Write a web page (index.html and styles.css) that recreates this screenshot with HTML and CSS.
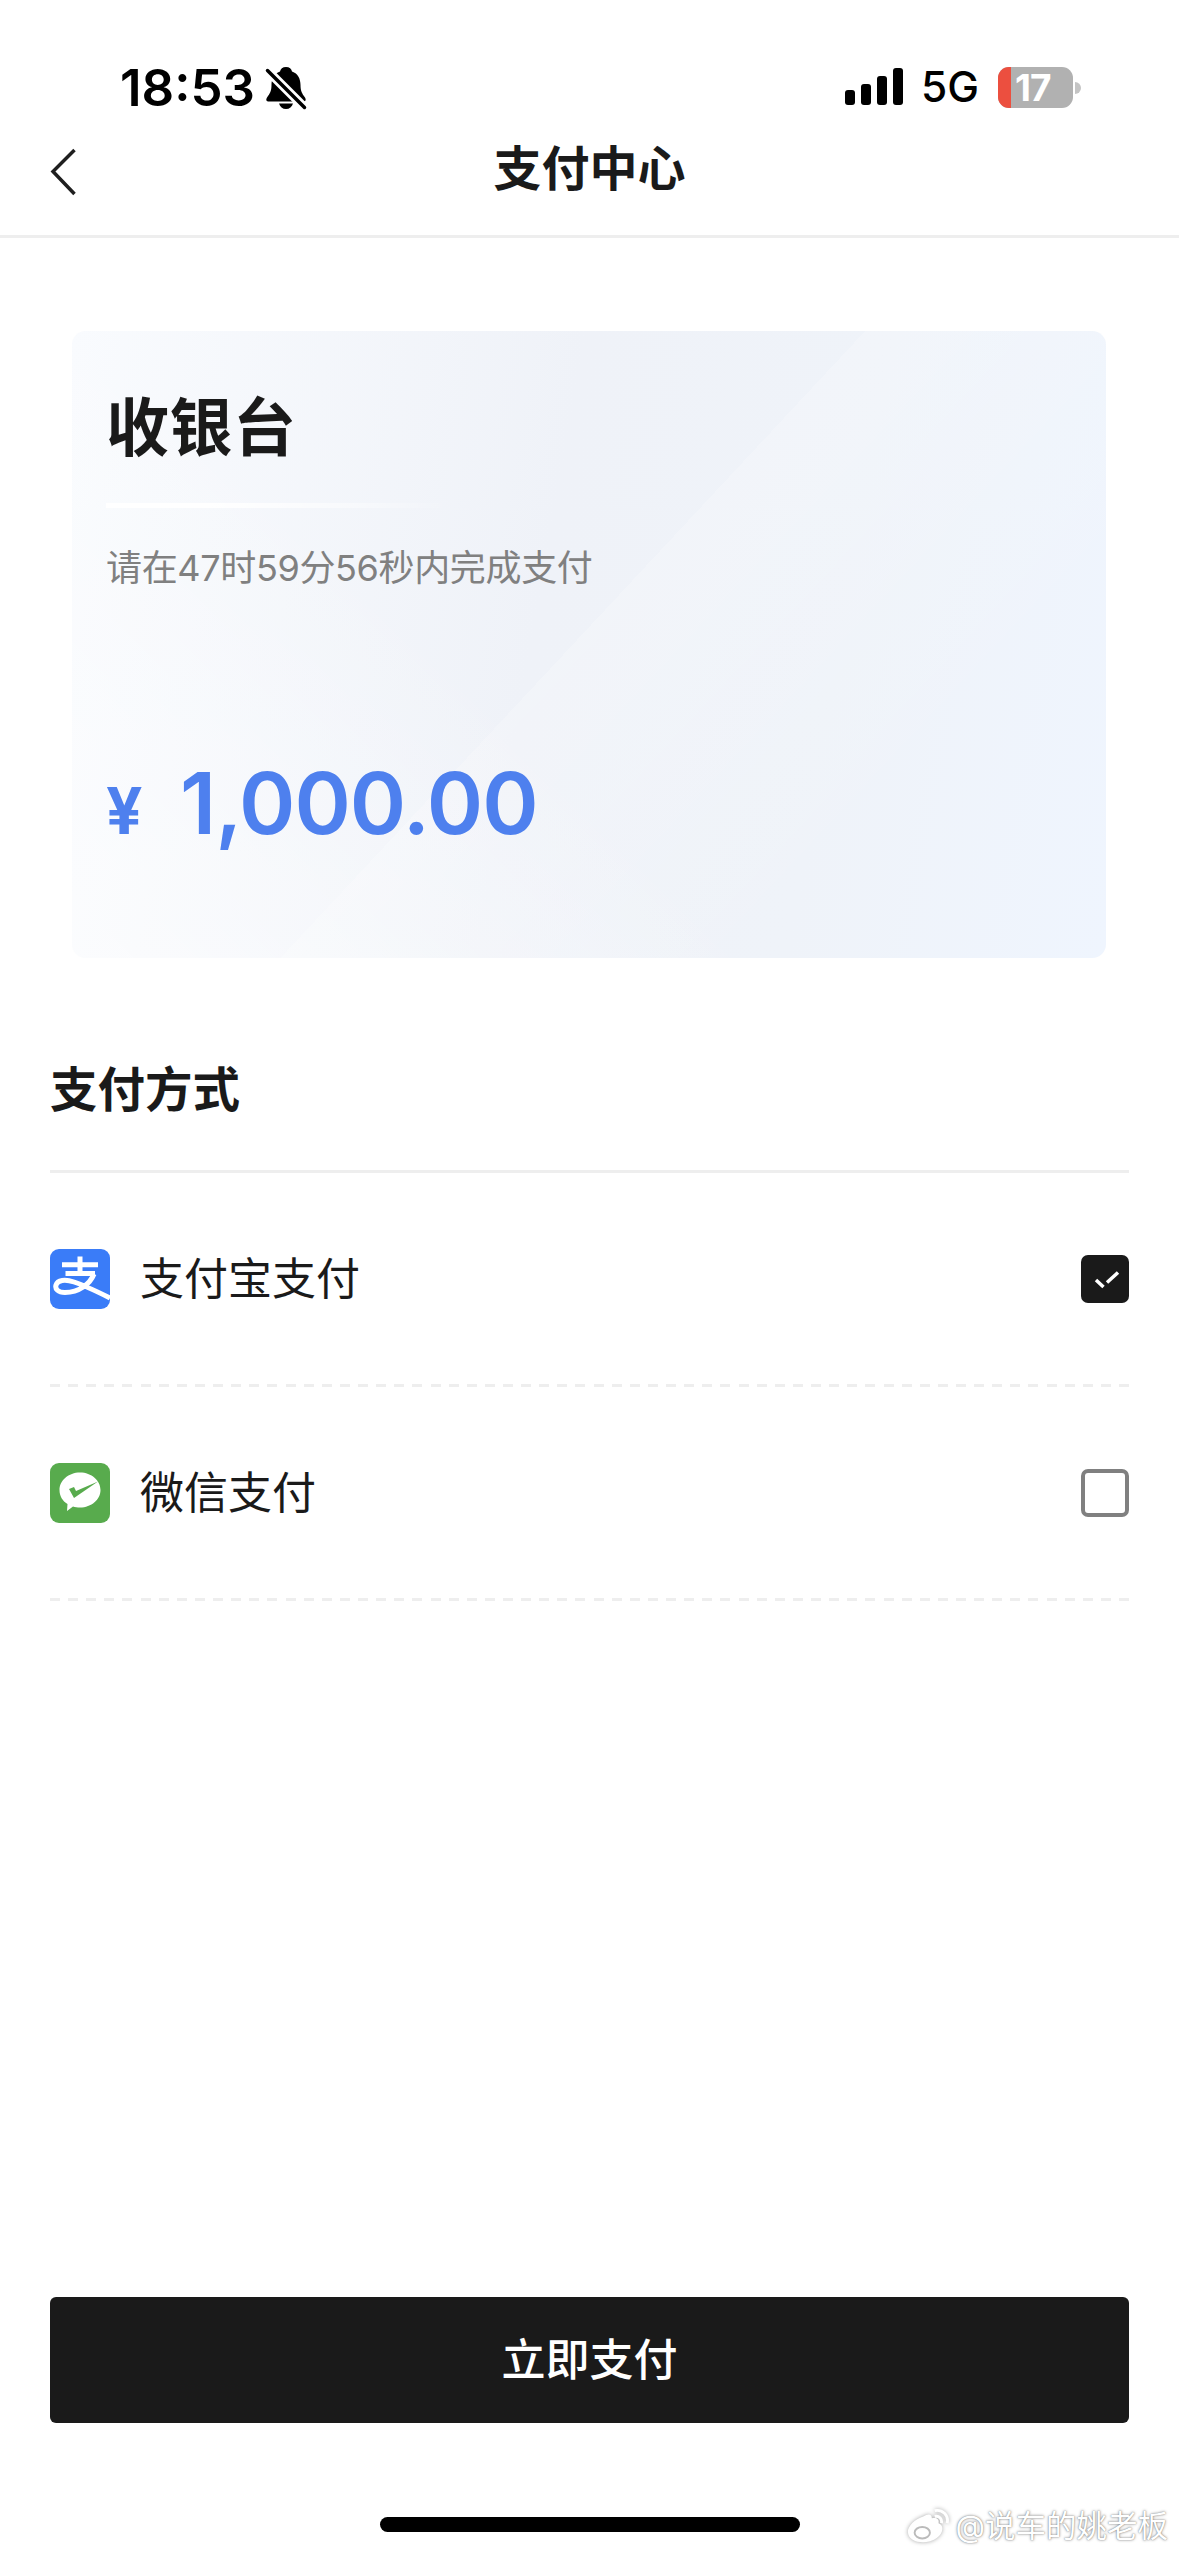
FILE: index.html
```html
<!DOCTYPE html>
<html lang="zh-CN">
<head>
<meta charset="utf-8">
<title>支付中心</title>
<link rel="stylesheet" href="styles.css">
</head>
<body>
<div class="page">
  <header class="header">
    <div class="status">
      <div class="status-left">
        <span class="time">18:53</span>
        <svg class="bell" viewBox="0 0 40 42" aria-hidden="true">
          <path class="bell-body" d="M20 0c3.500 0 5.500 2 6 4.500C32 6.500 34.500 12 34.500 18c0 6 1.500 8.500 4.500 12.500 1.500 2.500 .5 4-2 4H3c-2.500 0-3.500-1.500-2-4C4 26.500 5.500 24 5.500 18 5.500 12 8 6.500 14 4.500 14.500 2 16.500 0 20 0z"/>
          <path class="bell-body" d="M13 36.500h14c-1 3.500-3.500 5.500-7 5.500s-6-2-7-5.500z"/>
          <path class="bell-gap" d="M1 3l38 38"/>
          <path class="bell-slash" d="M1.500 3.500l37 37"/>
        </svg>
      </div>
      <div class="status-right">
        <div class="signal"><i class="bar b1"></i><i class="bar b2"></i><i class="bar b3"></i><i class="bar b4"></i></div>
        <span class="net">5G</span>
        <div class="battery">
          <div class="battery-body"><span class="battery-low"></span><span class="battery-num">17</span></div>
          <span class="battery-nub"></span>
        </div>
      </div>
    </div>
    <nav class="nav">
      <svg class="back" viewBox="0 0 26 48" aria-hidden="true"><path d="M24.500 2L3 23.500 24.500 46"/></svg>
      <h1 class="nav-title">支付中心</h1>
    </nav>
  </header>

  <main class="main">
    <section class="card">
      <h2 class="card-title">收银台</h2>
      <div class="card-rule"></div>
      <p class="card-note">请在47时59分56秒内完成支付</p>
      <div class="amount"><span class="yen">¥</span><span class="value">1,000.00</span></div>
    </section>

    <section class="methods">
      <h3 class="methods-title">支付方式</h3>
      <div class="method">
        <svg class="logo" viewBox="0 0 60 60" aria-hidden="true">
          <rect class="alipay-bg" width="60" height="60" rx="9"/>
          <path class="alipay-mark" d="M12 15.800H48M30 7.500V24M15.500 24.500H45"/>
          <path class="alipay-mark" d="M44 25C40 35 29 43.500 15 43.500 8 43.500 4.800 40 6 36 7.500 31 15 30 24 33 35 36.500 48 43 60 49"/>
        </svg>
        <span class="method-name">支付宝支付</span>
        <span class="check checked">
          <svg viewBox="0 0 48 48" aria-hidden="true"><path d="M15 25l7.500 7M26 27.500L37 17.500"/></svg>
        </span>
      </div>
      <div class="method">
        <svg class="logo" viewBox="0 0 60 60" aria-hidden="true">
          <rect class="wechat-bg" width="60" height="60" rx="9"/>
          <path class="wechat-bubble" d="M30 9.500c11.500 0 20.500 8 20.500 17.500S41.500 44.500 30 44.500c-2.500 0-5-.3-7-1L17 48l.5-7C12.500 38 9.500 33 9.500 27 9.500 17.500 18.500 9.500 30 9.500z"/>
          <path class="wechat-check" d="M19 26l5-2 2 4 22-9.500L24 35z"/>
        </svg>
        <span class="method-name">微信支付</span>
        <span class="check"></span>
      </div>
    </section>
  </main>

  <footer class="footer">
    <button class="pay" type="button">立即支付</button>
    <div class="home"></div>
  </footer>

  <div class="watermark">
    <svg class="weibo" viewBox="0 0 46 38" aria-hidden="true">
      <path class="weibo-body" d="M18 9c5-3 9-3 9 2 4-1 8 0 7 5 3 1 4 3 4 6 0 7-9 14-20 14C9 36 2 32 2 25c0-6 7-13 16-16z"/>
      <ellipse class="weibo-eye" cx="17" cy="26" rx="8" ry="6"/>
      <path class="weibo-wave" d="M30 9c5-1 8 3 7 7M30 3c8-2 15 5 13 13"/>
    </svg>
    <span class="watermark-text">@说车的姚老板</span>
  </div>
</div>
</body>
</html>
```

FILE: styles.css
```css
* { box-sizing: border-box; }

html, body { margin: 0; padding: 0; background: #fff; }

body {
  font-family: Inter, "Noto Sans CJK SC", "Noto Sans", sans-serif;
  color: #1a1a1a;
}

.page {
  position: relative;
  width: 1179px;
  height: 2556px;
  display: flex;
  flex-direction: column;
  background: #fff;
}

/* header */
.header { height: 238px; border-bottom: 3px solid #eeeeee; flex: none; }

.status {
  height: 130px;
  padding: 62px 98px 0 120px;
  display: flex;
  justify-content: space-between;
  align-items: flex-start;
  color: #000;
}

.status-left { display: flex; align-items: center; gap: 11px; height: 52px; }

.time { font-size: 51px; font-weight: 600; line-height: 52px; }

.bell { width: 40px; height: 42px; overflow: visible; }
.bell-body { fill: #000; }
.bell-gap { stroke: #fff; stroke-width: 9; fill: none; }
.bell-slash { stroke: #000; stroke-width: 3.500; stroke-linecap: round; fill: none; }

.status-right { display: flex; align-items: flex-start; height: 50px; }

.signal {
  display: flex;
  align-items: flex-end;
  gap: 6px;
  width: 58px;
  height: 37px;
  margin-top: 6px;
}

.bar { display: block; width: 10px; background: #000; border-radius: 3px; }
.b1 { height: 15px; }
.b2 { height: 21px; }
.b3 { height: 29px; }
.b4 { height: 37px; }

.net { margin-left: 18px; font-size: 42.500px; font-weight: 500; line-height: 50px; }

.battery { display: flex; align-items: center; margin-left: 19px; margin-top: 5px; }

.battery-body {
  display: flex;
  width: 75px;
  height: 41px;
  border-radius: 11px;
  background: #b1b1b1;
}

.battery-low { width: 13px; background: #ec4f3f; border-radius: 11px 0 0 11px; }

.battery-num {
  margin-left: 4px;
  color: #fff;
  font-size: 37px;
  font-weight: 700;
  line-height: 41px;
  letter-spacing: -1px;
}

.battery-nub {
  width: 6px;
  height: 12px;
  margin-left: 2px;
  background: #c4c4c4;
  border-radius: 0 6px 6px 0;
}

.nav {
  position: relative;
  height: 105px;
  display: flex;
  align-items: center;
  justify-content: center;
}

.back {
  position: absolute;
  left: 50px;
  top: 18px;
  width: 26px;
  height: 48px;
  fill: none;
  stroke: #1f1f1f;
  stroke-width: 3.500;
}

.nav-title {
  margin: 0 0 28px;
  font-size: 48px;
  font-weight: 700;
  line-height: 60px;
}

/* main */
.main { flex: 1; padding: 93px 50px 0; }

.card {
  margin: 0 23px 0 22px;
  height: 627px;
  padding: 51px 36px 0 34px;
  border-radius: 14px;
  background:
    linear-gradient(45deg, rgba(255, 255, 255, .55) 0%, rgba(255, 255, 255, 0) 42%),
    linear-gradient(133deg, rgba(255, 255, 255, 0) 49%, rgba(255, 255, 255, .2) 49%, rgba(255, 255, 255, 0) 80%),
    linear-gradient(100deg, #f9fbfe 0%, #eff2f8 45%, #eff3f9 72%, #eff5fe 100%);
}

.card-title {
  margin: 0;
  font-size: 63px;
  font-weight: 700;
  line-height: 90px;
  letter-spacing: 0.5px;
}

.card-rule {
  width: 345px;
  height: 5px;
  margin-top: 31px;
  background: linear-gradient(90deg, #ffffff 0%, #ffffff 30%, rgba(255, 255, 255, 0) 100%);
}

.card-note {
  margin: 35px 0 0;
  color: #808080;
  font-size: 36px;
  line-height: 50px;
  letter-spacing: -0.35px;
}

.amount {
  display: flex;
  align-items: baseline;
  margin-top: 150px;
  color: #4e80ee;
}

.yen { width: 74px; font-size: 64px; font-weight: 700; line-height: 120px; }

.value { font-size: 85.500px; font-weight: 600; line-height: 120px; letter-spacing: -1px; }

.methods { margin-top: 92px; }

.methods-title {
  margin: 0;
  height: 123px;
  padding-top: 10px;
  border-bottom: 3px solid #eeeeee;
  font-size: 47.500px;
  font-weight: 700;
  line-height: 60px;
}

.method {
  height: 214px;
  display: flex;
  align-items: center;
  padding-bottom: 3px;
  background: repeating-linear-gradient(90deg, #eeeeee 0, #eeeeee 10px, transparent 10px, transparent 18.120px) bottom left / 100% 3px no-repeat;
}

.logo { width: 60px; height: 60px; flex: none; }

.alipay-bg { fill: #3a7cf8; }
.alipay-mark { fill: none; stroke: #fff; stroke-width: 5; }

.wechat-bg { fill: #58ab4d; }
.wechat-bubble { fill: #fff; }
.wechat-check { fill: #58ab4d; }

.method-name { margin-left: 30px; font-size: 44px; line-height: 60px; flex: 1; }

.check {
  width: 48px;
  height: 48px;
  flex: none;
  border: 4px solid #808080;
  border-radius: 7px;
}

.check.checked { border: 0; background: #1a1a1a; }

.check svg {
  display: block;
  width: 48px;
  height: 48px;
  fill: none;
  stroke: #fff;
  stroke-width: 3.500;
}

/* footer */
.footer { flex: none; padding: 0 50px 24px; display: flex; flex-direction: column; align-items: center; }

.pay {
  width: 100%;
  height: 126px;
  padding: 0 0 6px;
  border: 0;
  border-radius: 6px;
  background: #1a1a1a;
  color: #fff;
  font-family: inherit;
  font-size: 44px;
  font-weight: 500;
}

.home { width: 420px; height: 15px; margin-top: 94px; border-radius: 8px; background: #000; }

/* watermark */
.watermark {
  position: absolute;
  right: 11px;
  bottom: 10px;
  display: flex;
  align-items: center;
  gap: 6px;
}

.weibo { width: 44px; height: 38px; filter: drop-shadow(0 0 2px rgba(0, 0, 0, .35)); }
.weibo-body { fill: #fff; }
.weibo-eye { fill: none; stroke: #bbb; stroke-width: 2; }
.weibo-wave { fill: none; stroke: #fff; stroke-width: 3; }

.watermark-text {
  color: #fff;
  font-size: 30.500px;
  line-height: 40px;
  text-shadow: 0 0 3px rgba(0, 0, 0, .45), 0 0 1px rgba(0, 0, 0, .4);
}
```
